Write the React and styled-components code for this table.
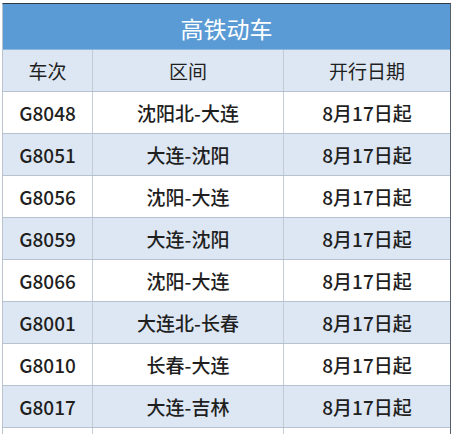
import React from 'react'
import styled, { createGlobalStyle } from 'styled-components'

const GlobalStyle = createGlobalStyle`
  html, body {
    margin: 0;
    padding: 0;
    background: #fff;
  }
`

const rows = [
  ['G8048', '沈阳北-大连', '8月17日起'],
  ['G8051', '大连-沈阳', '8月17日起'],
  ['G8056', '沈阳-大连', '8月17日起'],
  ['G8059', '大连-沈阳', '8月17日起'],
  ['G8066', '沈阳-大连', '8月17日起'],
  ['G8001', '大连北-长春', '8月17日起'],
  ['G8010', '长春-大连', '8月17日起'],
  ['G8017', '大连-吉林', '8月17日起'],
]

const Page = styled.div`
  width: 456px;
  height: 434px;
  overflow: hidden;
  padding: 3px 5px 0 2px;
  box-sizing: border-box;
`

const Table = styled.div`
  border-top: 1px solid #2c3a48;
  border-left: 1px solid #b9c4cf;
  border-right: 1px solid #55606b;
  font-family: "Noto Sans CJK SC", sans-serif;
`

const Title = styled.div`
  height: 46px;
  padding-top: 3px;
  background: #5b9bd5;
  color: #fff;
  font-size: 23px;
  display: flex;
  align-items: center;
  justify-content: center;
  border-bottom: 1px solid #8fb6dc;
  box-sizing: border-box;
`

const Row = styled.div`
  display: grid;
  grid-template-columns: 89px 191px 1fr;
  height: 42px;
  background: ${p => (p.$shade ? '#dde7f3' : '#ffffff')};
  border-bottom: 1px solid #b5c3d1;
  box-sizing: border-box;
`

const Cell = styled.div`
  display: flex;
  align-items: center;
  justify-content: center;
  font-size: 19px;
  font-weight: ${p => (p.$head ? 400 : 500)};
  color: #1f1f1f;
  border-left: ${p => (p.$first ? 'none' : '1px solid #c3ccd6')};
`

const App = () => (
  <Page>
    <GlobalStyle />
    <Table>
      <Title>高铁动车</Title>
      <Row $shade>
        <Cell $head $first>车次</Cell>
        <Cell $head>区间</Cell>
        <Cell $head>开行日期</Cell>
      </Row>
      {rows.map((r, i) => (
        <Row key={r[0]} $shade={i % 2 === 1}>
          <Cell $first>{r[0]}</Cell>
          <Cell>{r[1]}</Cell>
          <Cell>{r[2]}</Cell>
        </Row>
      ))}
      <Row>
        <Cell $first />
        <Cell />
        <Cell />
      </Row>
    </Table>
  </Page>
)

export default App
